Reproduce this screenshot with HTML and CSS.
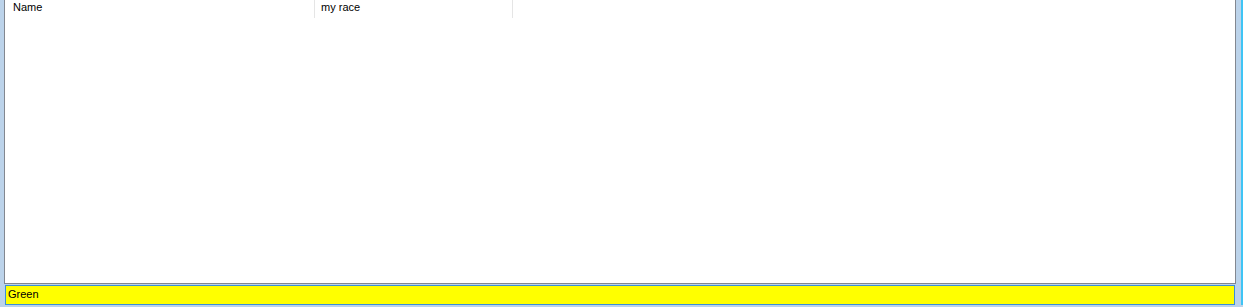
FILE: index.html
```html
<!DOCTYPE html>
<html lang="en">
<head>
    <meta charset="UTF-8">
    <title>Races</title>
    <link rel="stylesheet" href="styles.css">
</head>
<body>
    <div class="window">
        <div class="client">
            <!-- List view -->
            <div class="list">
                <div class="list-header">
                    <div class="col col-name">Name</div>
                    <div class="col col-race">my race</div>
                </div>
                <div class="list-body"></div>
            </div>

            <!-- Status field -->
            <div class="status">Green</div>
        </div>
        <div class="edge"></div>
    </div>
</body>
</html>
```

FILE: styles.css
```css
body {
    margin: 0;
    width: 1243px;
    height: 307px;
    overflow: hidden;
    background: #bcd3ea;
    font-family: Tahoma, "Liberation Sans", sans-serif;
    font-size: 11px;
    color: #000000;
}

.window {
    display: flex;
    height: 305px;
}

.client {
    flex: 1;
    display: flex;
    flex-direction: column;
    padding-left: 4px;
    padding-right: 5px;
}

.edge {
    width: 2px;
    background: #3fc4f5;
}

.list {
    flex: 1;
    display: flex;
    flex-direction: column;
    background: #ffffff;
    border: 1px solid #828790;
    border-top: none;
}

.list-header {
    display: flex;
    height: 18px;
}

.col {
    box-sizing: border-box;
    padding-left: 8px;
    line-height: 15px;
    border-right: 1px solid #e5e5e5;
}

.col-name {
    width: 310px;
}

.col-race {
    width: 198px;
    padding-left: 6px;
}

.list-body {
    flex: 1;
}

.status {
    margin-top: 1px;
    margin-left: 1px;
    margin-right: 1px;
    height: 18px;
    line-height: 17px;
    padding-left: 2px;
    background: #ffff00;
    border: 1px solid #3a8fd8;
}
```
